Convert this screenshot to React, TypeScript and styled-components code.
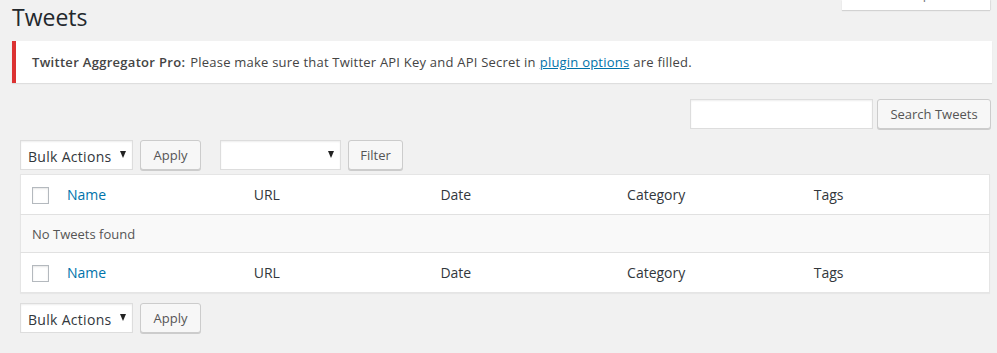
import React from "react";
import styled, { createGlobalStyle } from "styled-components";

const GlobalStyle = createGlobalStyle`
  body {
    margin: 0;
    background: #f1f1f1;
    color: #32373c;
    font-family: "Open Sans", "Noto Sans", sans-serif;
    font-size: 13px;
  }
`;

const Page = styled.div`
  padding: 0 5px 0 12px;
  width: 997px;
  box-sizing: border-box;
`;

const TopBar = styled.div`
  display: flex;
  justify-content: space-between;
  align-items: flex-start;
`;

const Title = styled.h1`
  margin: 3px 0 0;
  font-size: 23px;
  font-weight: 400;
  line-height: 29px;
  color: #23282d;
`;

const ScreenTab = styled.div`
  width: 148px;
  height: 10px;
  margin-right: 2px;
  overflow: hidden;
  background: #fff;
  box-shadow: 0 1px 1px rgba(0, 0, 0, 0.12), 1px 0 1px rgba(0, 0, 0, 0.06);
  box-sizing: border-box;
  padding-left: 26px;
  font-size: 13px;
  line-height: 18px;
  color: #72777c;
`;

const TabText = styled.div`
  margin-top: -15px;
`;

const Notice = styled.div`
  margin-top: 9px;
  height: 42px;
  background: #fff;
  border-left: 4px solid #dc3232;
  box-shadow: 0 1px 1px rgba(0, 0, 0, 0.08);
  display: flex;
  align-items: center;
  padding-left: 16px;
  font-size: 13px;
  letter-spacing: 0.22px;
  color: #444;
`;

const Strong = styled.strong`
  font-weight: 600;
  letter-spacing: 0.3px;
  margin-right: 5px;
`;

const Link = styled.a`
  color: #0073aa;
  text-decoration: underline;
  margin: 0 4px;
`;

const ListArea = styled.div`
  margin: 0 2px 0 8px;
`;

const SearchRow = styled.div`
  display: flex;
  justify-content: flex-end;
  gap: 4px;
  margin: 16px -1px 0 0;
`;

const SearchInput = styled.input`
  width: 183px;
  height: 30px;
  box-sizing: border-box;
  border: 1px solid #ddd;
  box-shadow: inset 0 1px 2px rgba(0, 0, 0, 0.07);
  background: #fff;
  margin: 0;
`;

const Button = styled.button<{ $w: number }>`
  width: ${(p) => p.$w}px;
  height: 30px;
  box-sizing: border-box;
  border: 1px solid #ccc;
  border-radius: 3px;
  background: #f7f7f7;
  box-shadow: 0 1px 0 #ccc;
  color: #555;
  font-family: inherit;
  font-size: 13px;
  padding: 0 0 1px;
  margin: 0;
`;

const NavRow = styled.div<{ $top: number }>`
  display: flex;
  align-items: flex-start;
  margin-top: ${(p) => p.$top}px;
  height: 34px;
`;

const Group = styled.div<{ $gap: number }>`
  display: flex;
  gap: 7px;
  margin-right: ${(p) => p.$gap}px;
`;

const SelectWrap = styled.div`
  position: relative;
`;

const Select = styled.select<{ $w: number }>`
  appearance: none;
  width: ${(p) => p.$w}px;
  height: 30px;
  box-sizing: border-box;
  border: 1px solid #ddd;
  background: #fff;
  box-shadow: inset 0 1px 2px rgba(0, 0, 0, 0.07);
  color: #32373c;
  font-family: inherit;
  font-size: 14px;
  letter-spacing: 0.3px;
  padding: 2px 0 0 7px;
  margin: 0;
  border-radius: 0;
`;

const Arrow = styled.span`
  position: absolute;
  right: 7px;
  top: 11px;
  width: 0;
  height: 0;
  border-left: 3.5px solid transparent;
  border-right: 3.5px solid transparent;
  border-top: 7px solid #222;
  pointer-events: none;
`;

const Table = styled.table`
  width: 100%;
  border-collapse: collapse;
  table-layout: fixed;
  background: #fff;
  border: 1px solid #e5e5e5;
  box-shadow: 0 1px 1px rgba(0, 0, 0, 0.04);
`;

const HeadRow = styled.tr<{ $foot?: boolean }>`
  height: 40px;
  border-${(p) => (p.$foot ? "top" : "bottom")}: 1px solid #e1e1e1;
`;

const CheckCell = styled.th`
  width: 24px;
  padding: 0 0 0 11px;
  text-align: left;
  vertical-align: middle;
`;

const Check = styled.span`
  display: block;
  width: 17px;
  height: 17px;
  border: 1px solid #b4b9be;
  box-sizing: border-box;
  background: #fff;
  box-shadow: inset 0 1px 2px rgba(0, 0, 0, 0.1);
  margin-top: 1px;
`;

const HeadCell = styled.th<{ $link?: boolean }>`
  text-align: left;
  font-weight: 400;
  font-size: 14px;
  padding: 0 10px 0 11px;
  color: ${(p) => (p.$link ? "#0073aa" : "#32373c")};
`;

const EmptyRow = styled.tr`
  height: 38px;
  background: #f9f9f9;
`;

const EmptyCell = styled.td`
  padding: 1px 0 0 11px;
  font-size: 13px;
  color: #555;
`;

const columns = ["Name", "URL", "Date", "Category", "Tags"];

const HeaderCells = () => (
  <>
    <CheckCell>
      <Check />
    </CheckCell>
    {columns.map((c, i) => (
      <HeadCell key={c} $link={i === 0}>
        {c}
      </HeadCell>
    ))}
  </>
);

const BulkActions = ({ gap }: { gap: number }) => (
  <Group $gap={gap}>
    <SelectWrap>
      <Select $w={113} defaultValue="bulk">
        <option value="bulk">Bulk Actions</option>
      </Select>
      <Arrow />
    </SelectWrap>
    <Button $w={61}>Apply</Button>
  </Group>
);

export default function App() {
  return (
    <Page>
      <GlobalStyle />
      <TopBar>
        <Title>Tweets</Title>
        <ScreenTab>
          <TabText>Screen Options</TabText>
        </ScreenTab>
      </TopBar>
      <Notice>
        <Strong>Twitter Aggregator Pro:</Strong>
        Please make sure that Twitter API Key and API Secret in
        <Link href="#">plugin options</Link>
        are filled.
      </Notice>
      <ListArea>
        <SearchRow>
          <SearchInput type="search" />
          <Button $w={114}>Search Tweets</Button>
        </SearchRow>
        <NavRow $top={11}>
          <BulkActions gap={19} />
          <Group $gap={0}>
            <SelectWrap>
              <Select $w={121} defaultValue="">
                <option value=""></option>
              </Select>
              <Arrow />
            </SelectWrap>
            <Button $w={55}>Filter</Button>
          </Group>
        </NavRow>
        <Table>
          <thead>
            <HeadRow>
              <HeaderCells />
            </HeadRow>
          </thead>
          <tbody>
            <EmptyRow>
              <EmptyCell colSpan={6}>No Tweets found</EmptyCell>
            </EmptyRow>
          </tbody>
          <tfoot>
            <HeadRow $foot>
              <HeaderCells />
            </HeadRow>
          </tfoot>
        </Table>
        <NavRow $top={10}>
          <BulkActions gap={0} />
        </NavRow>
      </ListArea>
    </Page>
  );
}
